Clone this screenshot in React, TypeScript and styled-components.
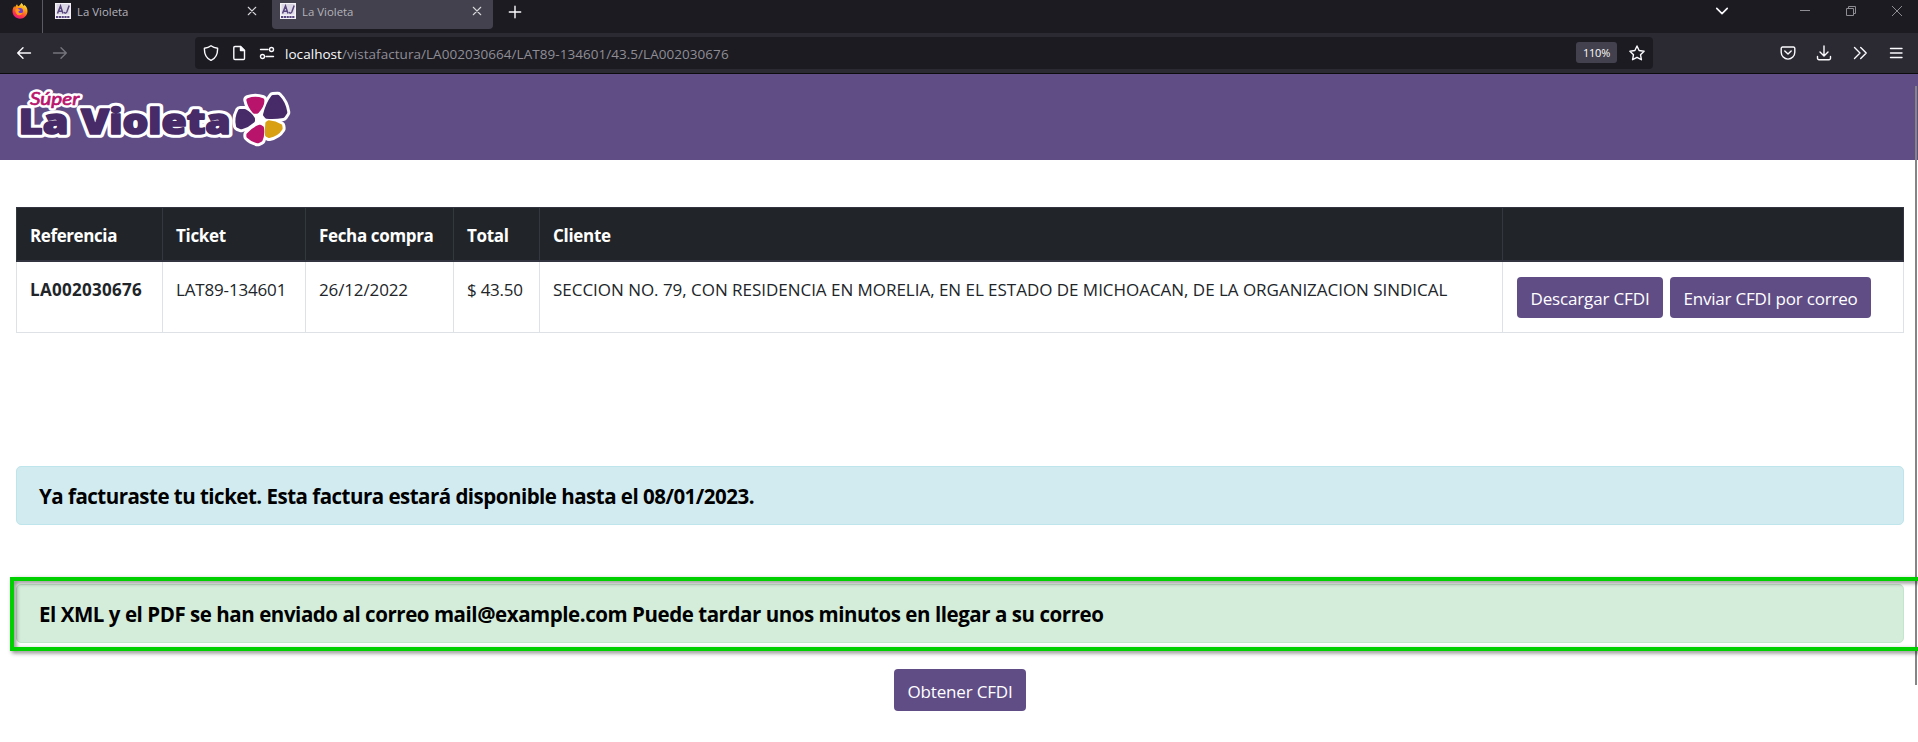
import React from "react";
import styled, { createGlobalStyle } from "styled-components";

const GlobalStyle = createGlobalStyle`
  * { box-sizing: border-box; }
  body { margin: 0; background: #fff; font-family: "Open Sans", "Segoe UI", sans-serif; }
`;

const Window = styled.div`
  position: relative;
  width: 100%;
  height: 742px;
  overflow: hidden;
  color: #212529;
`;

/* ---------- Browser chrome ---------- */

const TabStrip = styled.div`
  display: flex;
  align-items: flex-start;
  height: 33px;
  background: #1c1b22;
  color: #fbfbfe;
`;

const BrowserMark = styled.div`
  display: flex;
  width: 43px;
  height: 33px;
  padding: 3px 0 0 12px;
  border-right: 1px solid #5b5a62;
`;

const Tab = styled.div<{ $active?: boolean }>`
  display: flex;
  align-items: center;
  width: ${(p) => (p.$active ? 221 : 225)}px;
  height: 29px;
  margin-left: ${(p) => (p.$active ? 0 : 4)}px;
  padding: 0 ${(p) => (p.$active ? 11 : 15)}px 7px 8px;
  border-radius: 0 0 4px 4px;
  background: ${(p) => (p.$active ? "#42414d" : "transparent")};
`;

const TabTitle = styled.span`
  flex: 1;
  margin-left: 6px;
  font-size: 11.4px;
  line-height: 16px;
  padding-top: 1px;
  color: #b4b3ba;
`;

const Spacer = styled.div`
  flex: 1;
`;

const NewTab = styled.div`
  display: flex;
  padding: 5px 0 0 15px;
`;

const WindowControls = styled.div`
  display: flex;
  align-items: center;
  height: 22px;
  padding-right: 16px;
`;

const ControlSlot = styled.div<{ $after: number }>`
  display: flex;
  margin-right: ${(p) => p.$after}px;
`;

const Toolbar = styled.div`
  display: flex;
  align-items: center;
  height: 41px;
  padding-bottom: 1px;
  background: #2b2a33;
  border-bottom: 1px solid #0c0c0d;
`;

const NavButtons = styled.div`
  display: flex;
  gap: 20px;
  width: 195px;
  padding-left: 16px;
`;

const AddressBar = styled.div`
  display: flex;
  align-items: center;
  width: 1458px;
  height: 32px;
  padding: 0 8px;
  border-radius: 4px;
  background: #1c1b22;
`;

const SiteIcons = styled.div`
  display: flex;
  align-items: center;
  gap: 12px;
  width: 82px;
`;

const Address = styled.span`
  flex: 1;
  font-size: 13.5px;
  letter-spacing: 0.045px;
  line-height: 20px;
  padding-top: 2px;
  color: #8f8e96;
  b { font-weight: 400; color: #fbfbfe; }
`;

const ZoomBadge = styled.span`
  width: 41px;
  height: 21px;
  margin-right: 12px;
  border-radius: 3px;
  background: #42414d;
  color: #fbfbfe;
  font-size: 11px;
  letter-spacing: -0.2px;
  line-height: 22px;
  text-align: center;
`;

const ToolbarActions = styled.div`
  display: flex;
  flex: 1;
  justify-content: flex-end;
  gap: 20px;
  padding-right: 14px;
`;

/* ---------- Page ---------- */

const Brand = styled.header`
  height: 86px;
  background: #604d86;
`;

const Content = styled.main`
  display: flex;
  flex-direction: column;
  padding: 47px 14px 0 16px;
`;

const Table = styled.div`
  width: 1888px;
  font-size: 17px;
  line-height: 26px;
`;

const TableRow = styled.div<{ $head?: boolean }>`
  display: grid;
  grid-template-columns: 146px 143px 148px 86px 963px 402px;
  height: ${(p) => (p.$head ? 55 : 71)}px;
  background: ${(p) => (p.$head ? "#212529" : "#fff")};
  color: ${(p) => (p.$head ? "#fff" : "#212529")};
  border-style: solid;
  border-color: ${(p) => (p.$head ? "#32343f" : "#dee2e6")};
  border-width: ${(p) => (p.$head ? "1px 1px 2px 0" : "0 1px 1px 0")};
`;

const Cell = styled.div<{ $bold?: boolean; $track?: number; $head?: boolean }>`
  padding: 15px 0 0 13px;
  border-left: 1px solid ${(p) => (p.$head ? "#32383e" : "#dee2e6")};
  font-weight: ${(p) => (p.$bold ? 700 : 400)};
  letter-spacing: ${(p) => p.$track ?? 0}px;
  white-space: nowrap;
`;

const ActionCell = styled(Cell)`
  display: flex;
  gap: 7px;
  padding-left: 14px;
`;

const Button = styled.button<{ $width: number; $height?: number; $track: number }>`
  width: ${(p) => p.$width}px;
  height: ${(p) => p.$height ?? 41}px;
  padding: ${(p) => (p.$height ? 3 : 2)}px 0 0;
  border: 0;
  border-radius: 4px;
  background: #604d86;
  color: #fff;
  font: 400 17px/26px "Open Sans", "Segoe UI", sans-serif;
  letter-spacing: ${(p) => p.$track}px;
  white-space: nowrap;
`;

const Alert = styled.div<{ $tone: "info" | "success" }>`
  position: relative;
  width: 1888px;
  height: 59px;
  margin-top: ${(p) => (p.$tone === "info" ? 133 : 59)}px;
  padding-left: 22px;
  border: 1px solid ${(p) => (p.$tone === "info" ? "#bee5eb" : "#c3e6cb")};
  border-radius: 5px;
  background: ${(p) => (p.$tone === "info" ? "#d1ebf0" : "#d4ecda")};
  color: #000;
  font-size: 20.5px;
  font-weight: 700;
  letter-spacing: ${(p) => (p.$tone === "info" ? -0.51 : -0.45)}px;
  line-height: 59px;
  white-space: nowrap;
`;

const Highlight = styled.div`
  position: absolute;
  z-index: 2;
  top: -8px;
  left: -7px;
  width: 1930px;
  height: 74px;
  border: 4px solid #00d000;
  filter: drop-shadow(2px 2px 2px rgba(0, 0, 0, 0.5));
`;

const Footer = styled.div`
  display: flex;
  justify-content: center;
  margin-top: 26px;
  padding-left: 0;
`;

const ScrollThumb = styled.div`
  position: absolute;
  top: 86px;
  right: 1px;
  width: 2px;
  height: 599px;
  background: #858585;
`;

/* ---------- Drawings ---------- */

const Icon = ({ size = 16, w = 1.4, color = "#fbfbfe", children }: { size?: number; w?: number; color?: string; children: React.ReactNode }) => (
  <svg width={size} height={size} viewBox="0 0 16 16" fill="none" stroke={color} strokeWidth={w} strokeLinecap="round" strokeLinejoin="round">
    {children}
  </svg>
);

const Firefox = () => (
  <svg width="16" height="16" viewBox="0 0 16 16">
    <defs>
      <linearGradient id="flame" x1="0.8" y1="0" x2="0.3" y2="1">
        <stop offset="0" stopColor="#fff44f" />
        <stop offset="0.4" stopColor="#ff980e" />
        <stop offset="0.75" stopColor="#ff3647" />
        <stop offset="1" stopColor="#e31587" />
      </linearGradient>
    </defs>
    <path fill="url(#flame)" d="M9.3 0c1.4 1 2 1.900 2.300 3 .6-.3.700-.800.600-1.300C14.300 3.200 15.600 5.500 15.500 8.200 15.400 12.500 12 15.700 8 15.700S.5 12.500.5 8.300c0-2.200.8-4 2-5.200 0 .7.200 1 .5 1.300C3.800 2.800 4.300 2 5.100 1.300c.2 1.100.7 1.600 1.600 2C7.600 2.300 8.800 1.600 9.300 0z" />
    <circle cx="8" cy="8" r="3" fill="#6b3fd6" />
    <path fill="#ff9a1f" d="M3.300 6.400c1.400-1 2.900-.7 4 .1l1.100.4c-.3 1-1.700 1-2.100 1.800.5 1.400 2.400 1.900 4.500.9-.7 2-2.300 2.800-4 2.600C4.500 11.800 3.200 9.300 3.300 6.400z" />
  </svg>
);

const Favicon = () => (
  <svg width="16" height="16" viewBox="0 0 16 16">
    <rect width="16" height="16" fill="#f4f2f7" />
    <rect x="1.500" y="1" width="13" height="10.500" fill="#dcd7e4" />
    <path d="M2.500 10.500 5.500 3l2.500 7.500M4 8.300h3M9.200 9c.7 1.700 2 1.300 2.600 0L14.200 2.500" fill="none" stroke="#58467f" strokeWidth="1.500" />
    <path d="M1 14h14" stroke="#58467f" strokeWidth="2" strokeDasharray="2.200 .6" />
  </svg>
);

const PETALS: [string, string][] = [
  ["#b9146c", "M86 43Q107 35 128 43Q130 58 112 78L104 78Q90 62 86 43Z"],
  ["#472a68", "M160 34L174 33Q193 52 197 80L190 91Q165 95 141 93L136 87Q144 55 160 34Z"],
  ["#472a68", "M61 76L75 76Q92 85 100 99L100 105Q85 119 65 125L55 121Q49 98 61 76Z"],
  ["#b9146c", "M86 147Q100 130 121 123L127 127Q130 148 123 163L114 167Q96 162 86 152Z"],
  ["#d9a013", "M143 113L147 110Q167 112 182 121L183 128Q172 146 148 151L142 148Q141 130 143 113Z"],
];

const Wordmark = ({ outline }: { outline?: boolean }) => (
  <g
    fontFamily="Open Sans"
    fontWeight={800}
    fontSize={106}
    fill={outline ? "#fff" : "#472a68"}
    stroke={outline ? "#fff" : "#472a68"}
    strokeWidth={outline ? 23 : 5}
    strokeLinejoin="round"
  >
    <text x="56" y="192" textLength="149" lengthAdjust="spacingAndGlyphs">La</text>
    <text x="243" y="192" textLength="449" lengthAdjust="spacingAndGlyphs">Violeta</text>
  </g>
);

const Tagline = ({ outline }: { outline?: boolean }) => (
  <text
    x="90"
    y="106"
    textLength="148"
    lengthAdjust="spacingAndGlyphs"
    fontFamily="Lato"
    fontStyle="italic"
    fontWeight={400}
    fontSize={54}
    fill={outline ? "#fff" : "#b9146c"}
    stroke={outline ? "#fff" : "#b9146c"}
    strokeWidth={outline ? 16 : 2}
    strokeLinejoin="round"
  >
    Súper
  </text>
);

const Logo = () => (
  <svg width="320" height="86" viewBox="0 12 960 258">
    <Wordmark outline />
    <Wordmark />
    <Tagline outline />
    <Tagline />
    <g transform="translate(659 47)" strokeLinejoin="round">
      <circle cx="118" cy="99" r="26" fill="#fff" />
      {PETALS.map(([, d]) => (
        <path key={d} d={d} fill="#fff" stroke="#fff" strokeWidth={30} />
      ))}
      {PETALS.map(([c, d]) => (
        <path key={d} d={d} fill={c} stroke={c} strokeWidth={12} />
      ))}
    </g>
  </svg>
);

const CloseIcon = () => (
  <Icon size={10} w={1.7} color="#d8d8dc"><path d="M2 2l12 12M14 2L2 14" /></Icon>
);

const HEADINGS: [string, number][] = [
  ["Referencia", -0.4],
  ["Ticket", -0.3],
  ["Fecha compra", -0.35],
  ["Total", -0.3],
  ["Cliente", -0.3],
  ["", 0],
];

export default function App() {
  return (
    <Window>
      <GlobalStyle />
      <TabStrip>
        <BrowserMark><Firefox /></BrowserMark>
        <Tab><Favicon /><TabTitle>La Violeta</TabTitle><CloseIcon /></Tab>
        <Tab $active><Favicon /><TabTitle>La Violeta</TabTitle><CloseIcon /></Tab>
        <NewTab><Icon size={14} w={1.6}><path d="M8 1.500v13M1.500 8h13" /></Icon></NewTab>
        <Spacer />
        <WindowControls>
          <ControlSlot $after={71}><Icon size={14} w={1.900}><path d="M2 5l6 6 6-6" /></Icon></ControlSlot>
          <ControlSlot $after={36}><svg width="10" height="10"><path d="M0 4.500h10" stroke="#8e8d93" /></svg></ControlSlot>
          <ControlSlot $after={36}><svg width="10" height="10" fill="none" stroke="#8e8d93"><path d="M.5 2.500h7v7h-7zM2.500 2.500v-2h7v7h-2" /></svg></ControlSlot>
          <ControlSlot $after={0}><svg width="10" height="10"><path d="M0 0l10 10M10 0L0 10" stroke="#8e8d93" /></svg></ControlSlot>
        </WindowControls>
      </TabStrip>

      <Toolbar>
        <NavButtons>
          <Icon><path d="M14.500 8H1.700M7 2.700L1.700 8 7 13.300" /></Icon>
          <Icon color="#75747c"><path d="M1.500 8h12.800M9 2.700L14.300 8 9 13.300" /></Icon>
        </NavButtons>
        <AddressBar>
          <SiteIcons>
            <Icon><path d="M8 .8c2 1.500 4 2.100 6.600 2.400C14.800 9 12.500 13.500 8 15.400 3.500 13.500 1.200 9 1.400 3.200 4 2.900 6 2.300 8 .8z" /></Icon>
            <Icon><path d="M4 1.500h5.500l4 4V13.500a1 1 0 0 1-1 1H4a1.200 1.200 0 0 1-1.200-1.200V2.700A1.200 1.200 0 0 1 4 1.500z" /><path d="M9.500 1.500v4h4z" fill="#fbfbfe" /></Icon>
            <Icon><path d="M1.500 4.500H9M7 11.500h7.500" /><circle cx="12.500" cy="4.500" r="2" /><circle cx="3.500" cy="11.500" r="2" /></Icon>
          </SiteIcons>
          <Address><b>localhost</b>/vistafactura/LA002030664/LAT89-134601/43.5/LA002030676</Address>
          <ZoomBadge>110%</ZoomBadge>
          <Icon><path d="M8 1l2.100 4.500 5 .7-3.600 3.500.9 5L8 12.300l-4.400 2.400.9-5L.9 6.200l5-.7z" /></Icon>
        </AddressBar>
        <ToolbarActions>
          <Icon><path d="M2.500 2h11a1.300 1.300 0 0 1 1.300 1.300v4a6.800 6.800 0 0 1-13.600 0v-4A1.300 1.300 0 0 1 2.500 2zM4.800 6L8 9l3.200-3" /></Icon>
          <Icon><path d="M8 1v9.500M4 7l4 4 4-4M1.500 11.500v1.700a1.500 1.500 0 0 0 1.500 1.500h10a1.500 1.500 0 0 0 1.500-1.500v-1.700" /></Icon>
          <Icon><path d="M2.500 2.500L8 8l-5.500 5.500M8.700 2.500L14.200 8l-5.500 5.500" /></Icon>
          <Icon><path d="M2.500 3.500h11.500M2.500 8h11.500M2.500 12.500h11.500" /></Icon>
        </ToolbarActions>
      </Toolbar>

      <Brand><Logo /></Brand>
      <ScrollThumb />

      <Content>
        <Table>
          <TableRow $head>
            {HEADINGS.map(([label, track]) => (
              <Cell key={label} $head $bold $track={track}>{label}</Cell>
            ))}
          </TableRow>
          <TableRow>
            <Cell $bold $track={0.3}>LA002030676</Cell>
            <Cell $track={-0.17}>LAT89-134601</Cell>
            <Cell $track={-0.13}>26/12/2022</Cell>
            <Cell $track={-0.25}>$ 43.50</Cell>
            <Cell $track={-0.03}>SECCION NO. 79, CON RESIDENCIA EN MORELIA, EN EL ESTADO DE MICHOACAN, DE LA ORGANIZACION SINDICAL</Cell>
            <ActionCell>
              <Button $width={146} $track={-0.15}>Descargar CFDI</Button>
              <Button $width={201} $track={-0.2}>Enviar CFDI por correo</Button>
            </ActionCell>
          </TableRow>
        </Table>

        <Alert $tone="info">Ya facturaste tu ticket. Esta factura estará disponible hasta el 08/01/2023.</Alert>
        <Alert $tone="success">
          El XML y el PDF se han enviado al correo mail@example.com Puede tardar unos minutos en llegar a su correo
          <Highlight />
        </Alert>

        <Footer>
          <Button $width={132} $height={42} $track={-0.17}>Obtener CFDI</Button>
        </Footer>
      </Content>
    </Window>
  );
}
